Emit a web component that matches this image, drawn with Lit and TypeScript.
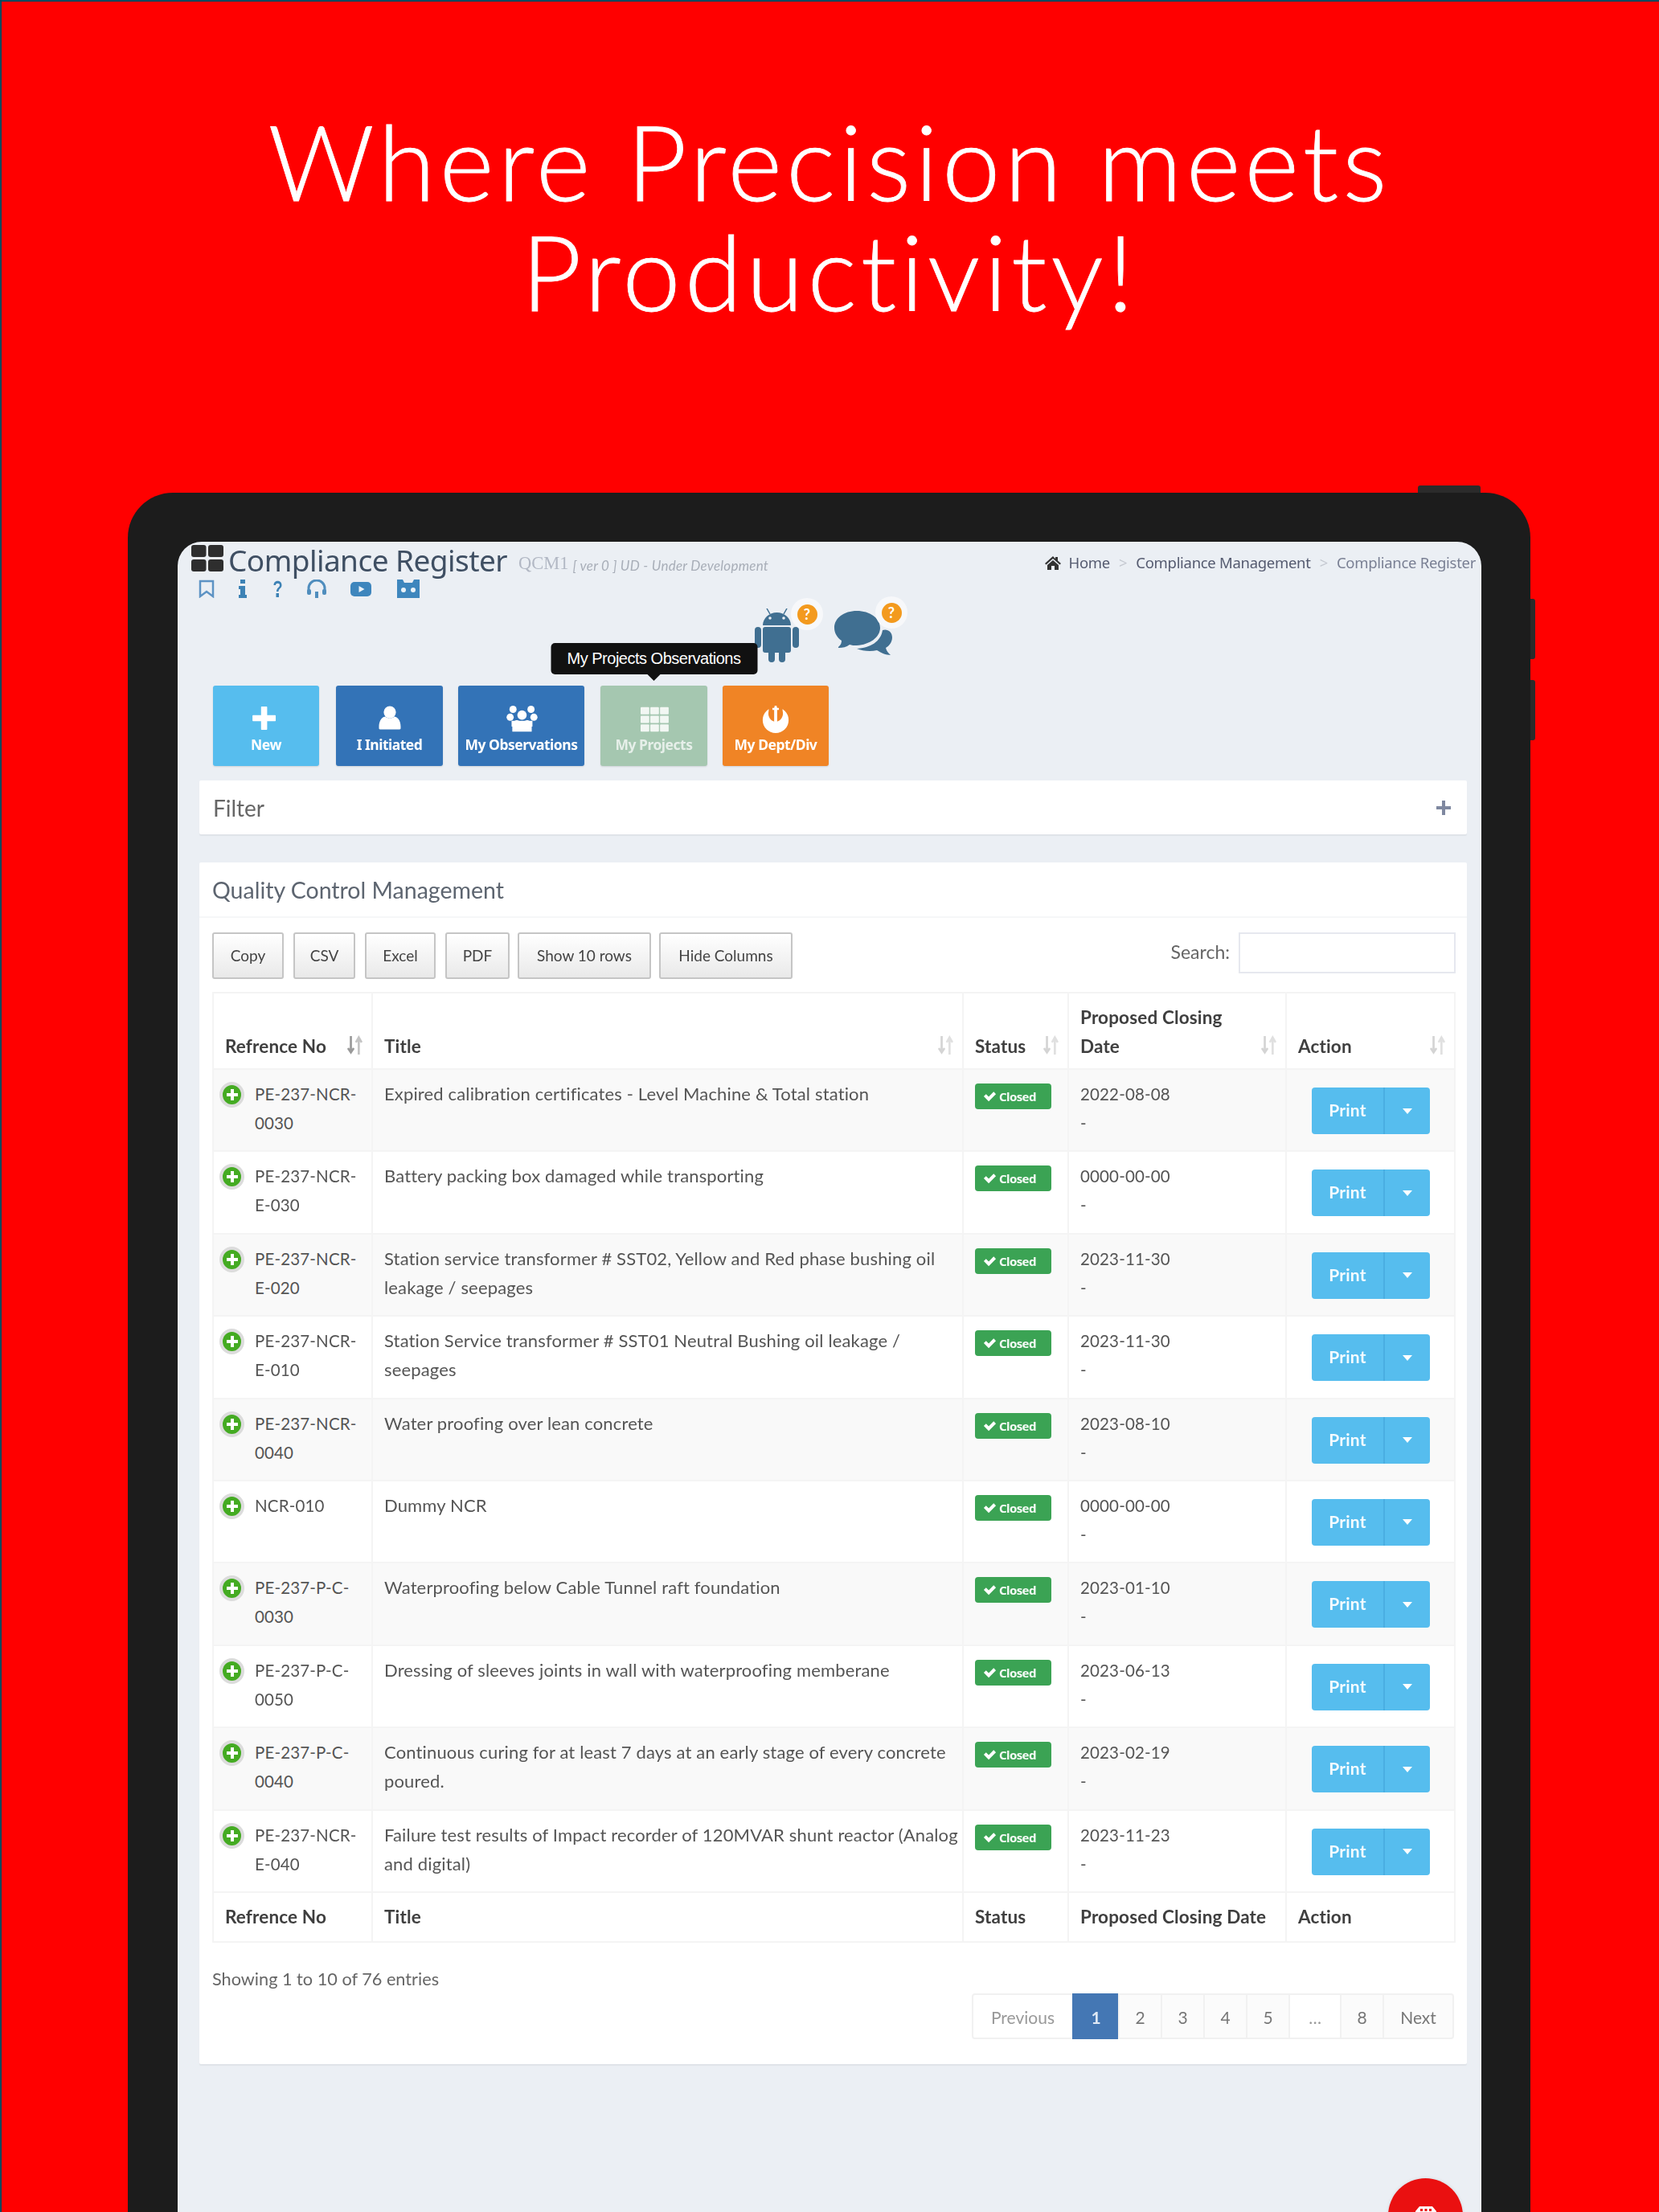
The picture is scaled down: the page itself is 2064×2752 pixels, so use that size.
import { LitElement, html, css, svg } from "lit";
import { customElement } from "lit/decorators.js";

const rows = [
  ["PE-237-NCR-0030", "Expired calibration certificates - Level Machine & Total station", "2022-08-08"],
  ["PE-237-NCR-E-030", "Battery packing box damaged while transporting", "0000-00-00"],
  ["PE-237-NCR-E-020", "Station service transformer # SST02, Yellow and Red phase bushing oil leakage / seepages", "2023-11-30"],
  ["PE-237-NCR-E-010", "Station Service transformer # SST01 Neutral Bushing oil leakage / seepages", "2023-11-30"],
  ["PE-237-NCR-0040", "Water proofing over lean concrete", "2023-08-10"],
  ["NCR-010", "Dummy NCR", "0000-00-00"],
  ["PE-237-P-C-0030", "Waterproofing below Cable Tunnel raft foundation", "2023-01-10"],
  ["PE-237-P-C-0050", "Dressing of sleeves joints in wall with waterproofing memberane", "2023-06-13"],
  ["PE-237-P-C-0040", "Continuous curing for at least 7 days at an early stage of every concrete poured.", "2023-02-19"],
  ["PE-237-NCR-E-040", "Failure test results of Impact recorder of 120MVAR shunt reactor (Analog and digital)", "2023-11-23"],
];

const sortIcon = (active = false) => html`<svg class="sort" viewBox="0 0 24 28" width="22" height="25">
  <path d="M7 1v20M3 18l4 6 4-6" fill="none" stroke=${active ? "#9a9a9a" : "#d4d4d4"} stroke-width="3"/>
  <path d="M18 27V6M14 10l4-7 4 7" fill="none" stroke=${active ? "#c4c4c4" : "#e0e0e0"} stroke-width="3"/>
</svg>`;

const tileIcons: Record<string, unknown> = {
  plus: svg`<path d="M14 0h8v14h14v8H22v14h-8V22H0v-8h14z" transform="translate(2 2) scale(.85)" fill="#fff" stroke="#fff" stroke-width="2" stroke-linejoin="round"/>`,
  user: svg`<circle cx="20" cy="9" r="8.5" fill="#fff"/><path d="M5 32c-1-12 5-17 9-17 2 3 10 3 12 0 4 0 10 5 9 17-1 1-2 1-3 1H8c-1 0-2 0-3-1z" fill="#fff"/>`,
  users: svg`<circle cx="8" cy="5" r="5" fill="#fff"/><circle cx="33" cy="5" r="5" fill="#fff"/><circle cx="4" cy="16" r="5" fill="#fff"/><circle cx="37" cy="16" r="5" fill="#fff"/><circle cx="20.5" cy="13" r="6.5" fill="#fff"/><path d="M6 21h29v8H6z" fill="#fff"/><path d="M7 36V27c0-5 4-7 7-7 3 2 10 2 13 0 3 0 7 2 7 7v9z" fill="#fff"/>`,
  grid: svg`${[0, 1, 2].map((r) => [0, 1, 2].map((c) => svg`<rect x=${1 + c * 13.5} y=${2 + r * 12} width="12" height="10" rx="1" fill="#fff" opacity=".85"/>`))}`,
  rebel: svg`<circle cx="20" cy="20" r="18" fill="#fff"/>
    <path d="M9 0H18V22C13 21 9 15 10 9 10.500 6 11 3 9 0z" fill="#f08425"/>
    <path d="M31 0H22V22C27 21 31 15 30 9 29.500 6 29 3 31 0z" fill="#f08425"/>
    <path d="M18.500 0h3v3h3v3h-3v17h-3V6h-3V3h3z" fill="#fff"/>`,
};

@customElement("app-root")
export class AppRoot extends LitElement {
  static styles = css`
    :host { display: block; width: 2064px; height: 2752px; overflow: hidden; }
    * { box-sizing: border-box; }
    .page { width: 2064px; height: 2752px; background: #ff0000; border-left: 2px solid #004a5e; border-top: 2px solid #004a5e; display: flex; flex-direction: column; overflow: hidden; font-family: "Lato", "Noto Sans", sans-serif; }
    h1 { margin: 0 0 0 -2px; padding-top: 130px; height: 611px; text-align: center; color: #fff; font: 300 130px/137px "Lato", "Liberation Sans", sans-serif; letter-spacing: 4.9px; -webkit-text-stroke: .8px #fff; flex: none; }
    .tablet { position: relative; flex: 1; margin-left: 157px; width: 1745px; background: #1c1c1c; border-radius: 56px 56px 0 0; padding: 61px 61px 0 62px; display: flex; min-height: 0; }
    .bump { position: absolute; top: -9px; left: 1605px; width: 78px; height: 9px; background: #2b2b2b; border-radius: 3px 3px 0 0; }
    .side { position: absolute; left: 1745px; width: 6px; background: #2b2b2b; border-radius: 0 3px 3px 0; }
    .side.a { top: 132px; height: 75px; }
    .side.b { top: 233px; height: 75px; }
    .screen { position: relative; flex: 1; background: #ebeff4; border-radius: 30px 30px 0 0; color: #555; filter: blur(.55px); }

    .top { display: flex; justify-content: space-between; height: 46px; padding: 4px 7px 0 17px; }
    .brand { display: flex; align-items: flex-start; }
    .logo { margin-right: 6px; }
    .brand h2 { margin: 0; font: 400 37px/38px "Noto Sans", sans-serif; color: #3f4f63; letter-spacing: -.55px; }
    .code { font: 400 22.5px/40px "Liberation Serif", serif; color: #b2b8c4; margin-left: 14px; padding-top: 3px; }
    .ver { font: italic 400 17px/40px "Lato", sans-serif; color: #a8aeb8; margin-left: 5px; padding-top: 6px; letter-spacing: .25px; }
    .crumbs { display: flex; align-items: center; height: 44px; gap: 11px; font: 400 18.5px/24px "Noto Sans", sans-serif; color: #555b70; letter-spacing: -.3px; }
    .crumbs .sep { color: #c4c8d0; }
    .crumbs .last { color: #7a8094; }
    .home { margin-right: -1px; }
    .links { display: flex; align-items: center; padding-left: 26px; height: 25px; }
    .links svg { display: block; }
    .links .l1 { margin-right: 30px; }
    .links .l2 { margin-right: 32px; }
    .links .l3 { margin-right: 30px; }
    .links .l4 { margin-right: 30px; }
    .links .l5 { margin-right: 32px; }

    .alerts { display: flex; margin: 12px 0 0 717px; height: 96px; align-items: flex-start; }
    .alert { position: relative; }
    .alert svg { display: block; }
    .droid { width: 57px; height: 67px; margin-right: 43px; }
    .chat { width: 72px; height: 57px; margin-top: 3px; }
    .dot { position: absolute; width: 40px; height: 40px; border-radius: 50%; background: #f7f8fa; display: flex; align-items: center; justify-content: center; }
    .dot span { width: 25px; height: 25px; border-radius: 50%; background: #f39a1e; color: #fff; font: 700 18px/25px "Lato", sans-serif; text-align: center; display: block; }
    .droid .dot { left: 46px; top: -13px; }
    .chat .dot { left: 51px; top: -18px; }

    .tiles { display: flex; margin-left: 44px; height: 100px; }
    .tile { position: relative; display: flex; flex-direction: column; align-items: center; border-radius: 3px; color: #fff; font: 700 17.5px/22px "Noto Sans", sans-serif; letter-spacing: -.5px; padding-top: 25px; box-shadow: 0 1px 2px rgba(0,0,0,.12); }
    .tile svg { display: block; height: 34px; margin-bottom: 3px; }
    .tile.new { width: 132px; background: #56bdee; margin-right: 21px; }
    .tile.init { width: 133px; background: #3373b7; margin-right: 19px; }
    .tile.obs { width: 157px; background: #3373b7; margin-right: 20px; }
    .tile.proj { width: 133px; background: #a5c7b0; margin-right: 19px; color: #e6efe9; }
    .tile.dept { width: 132px; background: #f08425; }
    .tip { position: absolute; bottom: calc(100% + 14px); left: 50%; transform: translateX(-50%); width: 257px; height: 39px; background: #111; border-radius: 5px; color: #fff; font: 400 20px/39px "Liberation Sans", sans-serif; text-align: center; white-space: nowrap; }
    .tip::after { content: ""; position: absolute; top: 100%; left: 50%; margin-left: -8px; border: 8px solid transparent; border-bottom: 0; border-top-color: #111; }

    .box { margin: 18px 18px 0 27px; background: #fff; border-radius: 2px; box-shadow: 0 2px 1px #dfe3e8; }
    .filter { display: flex; justify-content: space-between; align-items: center; height: 67px; padding: 0 17px; font: 400 28px/32px "Lato", sans-serif; color: #666; }
    .filter svg { display: block; margin-right: 3px; }
    .card { margin-top: 35px; height: 1495px; }
    .card-head { height: 69px; border-bottom: 2px solid #f6f7f8; padding: 17px 16px 0; font: 400 28.5px/34px "Lato", sans-serif; color: #5d6570; }
    .tools { display: flex; justify-content: space-between; padding: 18px 14px 0 16px; height: 92px; }
    .btns { display: flex; }
    .btn { height: 58px; border: 2px solid #c5c5c5; border-radius: 3px; background: linear-gradient(#fff, #e9e9e9); color: #444; font: 400 19px/54px "Lato", sans-serif; text-align: center; margin-right: 12px; }
    .btn.b1 { width: 89px; }
    .btn.b2 { width: 77px; }
    .btn.b3 { width: 88px; }
    .btn.b4 { width: 80px; margin-right: 10px; }
    .btn.b5 { width: 166px; margin-right: 10px; }
    .btn.b6 { width: 166px; margin-right: 0; }
    .search { display: flex; align-items: flex-start; font: 400 23px/48px "Lato", sans-serif; color: #666; }
    .search i { display: block; width: 270px; height: 51px; margin-left: 11px; background: #fff; border: 2px solid #e6e8ef; }

    table { margin-left: 16px; width: 1545px; table-layout: fixed; border-collapse: collapse; font: 400 22px/36px "Lato", sans-serif; letter-spacing: .15px; color: #555; }
    th, td { border: 2px solid #f4f4f4; text-align: left; vertical-align: top; }
    th { position: relative; font-size: 22.5px; font-weight: 700; color: #3f3f3f; padding: 12px 32px 9px 14px; vertical-align: bottom; }
    .sort { position: absolute; right: 10px; bottom: 16px; }
    td { height: 102.4px; padding: 12px 8px 0 14px; }
    td.title { padding-right: 0; }
    tbody tr:nth-child(odd) td { background: #f9f9f9; }
    td.ref { position: relative; padding-left: 51px; font-size: 20.5px; }
    td.date { font-size: 20.5px; }
    .expand { position: absolute; left: 7px; top: 15px; width: 31px; height: 32px; border-radius: 50%; background: #44ab22; border: 4px solid #dcdcdc; display: flex; align-items: center; justify-content: center; }
    .expand svg { display: block; }
    tfoot th { height: 62px; padding: 12px 8px 12px 14px; vertical-align: middle; }
    .badge { display: flex; align-items: center; gap: 3px; width: 95px; height: 32px; margin-top: 5px; padding-left: 10px; background: #3ba354; border-radius: 4px; color: #f4faf5; font: 700 15px/32px "Noto Sans", sans-serif; letter-spacing: -.6px; }
    .split { display: flex; width: 147px; height: 58px; margin: 10px 0 0 17px; border-radius: 4px; background: #56bdee; color: #f4fbff; font: 700 21px/56px "Lato", sans-serif; overflow: hidden; }
    .split b { width: 91px; font-weight: 700; text-align: center; border-right: 2px solid #4aaee2; }
    .split span { flex: 1; display: flex; align-items: center; justify-content: center; }

    .info { margin: 31px 0 0 16px; font: 400 21.7px/28px "Lato", sans-serif; color: #666; }
    .pager { display: flex; justify-content: flex-end; margin: 4px 16px 0 0; font: 400 21px/55px "Lato", sans-serif; color: #777; }
    .pager div { height: 57px; border: 2px solid #f1f1f1; margin-left: -2px; text-align: center; }
    .pager .p1 { width: 127px; color: #999; background: #fff; border-radius: 4px 0 0 4px; }
    .pager .on { width: 59px; background: #4477b4; border-color: #4477b4; color: #dfe9f5; font-weight: 700; }
    .pager .pn { width: 55px; background: #fbfbfb; }
    .pager .dots { width: 66px; background: #fff; color: #999; }
    .pager .nx { width: 89px; background: #fbfbfb; border-radius: 0 4px 4px 0; }
    .fab { position: absolute; left: 1506px; top: 2036px; width: 93px; height: 93px; border-radius: 50%; background: #ea1010; display: flex; justify-content: center; padding-top: 35px; box-shadow: 0 0 4px rgba(0,0,0,.1); }
    .fab svg { display: block; }
  `;

  tile(cls: string, icon: string, label: string, w: number, tip = false) {
    return html`<div class="tile ${cls}">
      ${tip ? html`<div class="tip">My Projects Observations</div>` : ""}
      <svg viewBox="0 0 40 38" width=${w} height="34">${tileIcons[icon]}</svg>${label}
    </div>`;
  }

  render() {
    return html`<div class="page">
      <h1>Where Precision meets<br />Productivity!</h1>
      <div class="tablet">
        <div class="bump"></div><div class="side a"></div><div class="side b"></div>
        <div class="screen">
          <div class="top">
            <div class="brand">
              <svg class="logo" viewBox="0 0 40 33" width="40" height="33"><rect width="18.5" height="15" rx="3" fill="#2e2e2e"/><rect x="21" width="19" height="15" rx="3" fill="#2e2e2e"/><rect y="18" width="18.5" height="15" rx="3" fill="#2e2e2e"/><rect x="21" y="18" width="19" height="15" rx="3" fill="#2e2e2e"/></svg>
              <h2>Compliance Register</h2>
              <span class="code">QCM1</span><span class="ver">[ ver 0 ] UD - Under Development</span>
            </div>
            <div class="crumbs">
              <svg class="home" viewBox="0 0 20 18" width="20" height="18"><path d="M10 1L0 10l1.5 1.5L10 4l8.500 7.500L20 10l-4-3.500V2h-3v2zM3 12v6h5v-5h4v5h5v-6l-7-6z" fill="#333"/></svg>
              <span>Home</span><span class="sep">&gt;</span><span>Compliance Management</span><span class="sep">&gt;</span><span class="last">Compliance Register</span>
            </div>
          </div>
          <div class="links">
            <svg class="l1" viewBox="0 0 20 23" width="20" height="23"><path d="M2 2h16v19l-8-6-8 6z" fill="none" stroke="#5d93c4" stroke-width="2.500"/></svg>
            <svg class="l2" viewBox="0 0 10 23" width="10" height="23"><path d="M2 0h6v5H2zM0 8h8v11h2v4H0v-4h2v-7H0z" fill="#3d82b5"/></svg>
            <svg class="l3" viewBox="0 0 13 23" width="13" height="23"><path d="M1.500 7c0-7 10-7 10 0 0 4-4 4-4 8H5c0-5 4-5 4-8 0-3-5-3-5 0zM4.500 17h3.500v5H4.500z" fill="#3d82b5"/></svg>
            <svg class="l4" viewBox="0 0 24 23" width="24" height="23"><path d="M2 15V11a10 10 0 0 1 20 0v4" fill="none" stroke="#4f8dbd" stroke-width="3"/><rect x="0" y="12" width="5" height="7" rx="2" fill="#4f8dbd"/><rect x="19" y="12" width="5" height="7" rx="2" fill="#4f8dbd"/><rect x="10" y="15" width="4" height="8" fill="#4f8dbd"/></svg>
            <svg class="l5" viewBox="0 0 26 20" width="26" height="20"><rect width="26" height="18" y="1" rx="5" fill="#3e86bd"/><path d="M10.500 6l7 4-7 4z" fill="#eaf2f8"/></svg>
            <svg viewBox="0 0 28 23" width="28" height="23"><path d="M0 0h7l2 4h10l2-4h7v23H0z" fill="#3e86bd"/><circle cx="8" cy="13" r="3" fill="#eaf2f8"/><circle cx="20" cy="13" r="3" fill="#eaf2f8"/></svg>
          </div>
          <div class="alerts">
            <div class="alert droid">
              <svg viewBox="0 0 57 67" width="57" height="67" fill="#406f91">
                <path d="M16 0l4 7M41 0l-4 7" stroke="#406f91" stroke-width="1.500"/>
                <path d="M11 21a17.500 16 0 0 1 35 0z"/><rect x="11" y="23" width="35" height="32" rx="3"/>
                <rect x="1" y="23" width="8" height="26" rx="4"/><rect x="48" y="23" width="8" height="26" rx="4"/>
                <rect x="18" y="50" width="8" height="17" rx="4"/><rect x="31" y="50" width="8" height="17" rx="4"/>
                <circle cx="20" cy="12" r="1.800" fill="#ebeff4"/><circle cx="37" cy="12" r="1.800" fill="#ebeff4"/>
              </svg>
              <div class="dot"><span>?</span></div>
            </div>
            <div class="alert chat">
              <svg viewBox="0 0 72 57" width="72" height="57" fill="#406f91">
                <path d="M28 0C44 0 57 9 57 21S44 42 28 43C24 43 22 43 19 42 15 45 10 46 6 46 4 46 5 45 6 44 8 42 9 40 9 37 3 33 0 27 0 21 0 9 12 0 28 0z"/>
                <path d="M60 24C66 22 72 26 72 33 72 39 68 44 64 46 65 50 67 52 70 55 64 55 58 52 53 49 45 51 35 50 28 47 45 46 58 38 60 24z"/>
              </svg>
              <div class="dot"><span>?</span></div>
            </div>
          </div>
          <div class="tiles">
            ${this.tile("new", "plus", "New", 38)}
            ${this.tile("init", "user", "I Initiated", 40)}
            ${this.tile("obs", "users", "My Observations", 40)}
            ${this.tile("proj", "grid", "My Projects", 40, true)}
            ${this.tile("dept", "rebel", "My Dept/Div", 40)}
          </div>
          <div class="box filter"><span>Filter</span>
            <svg viewBox="0 0 18 18" width="18" height="18"><path d="M7 0h4v7h7v4h-7v7H7v-7H0V7h7z" fill="#7f88a0"/></svg>
          </div>
          <div class="box card">
            <div class="card-head">Quality Control Management</div>
            <div class="tools">
              <div class="btns">
                <div class="btn b1">Copy</div><div class="btn b2">CSV</div><div class="btn b3">Excel</div><div class="btn b4">PDF</div><div class="btn b5">Show 10 rows</div><div class="btn b6">Hide Columns</div>
              </div>
              <div class="search">Search:<i></i></div>
            </div>
            <table>
              <colgroup><col style="width:198px" /><col style="width:735px" /><col style="width:131px" /><col style="width:271px" /><col style="width:210px" /></colgroup>
              <thead><tr>
                <th>Refrence No${sortIcon(true)}</th><th>Title${sortIcon()}</th><th>Status${sortIcon()}</th><th>Proposed Closing Date${sortIcon()}</th><th>Action${sortIcon()}</th>
              </tr></thead>
              <tbody>
                ${rows.map((r) => html`<tr>
                  <td class="ref"><span class="expand"><svg viewBox="0 0 14 14" width="14" height="14"><path d="M5 0h4v5h5v4H9v5H5V9H0V5h5z" fill="#fff"/></svg></span>${r[0]}</td>
                  <td class="title">${r[1]}</td>
                  <td><div class="badge"><svg viewBox="0 0 18 14" width="17" height="14"><path d="M1 7l3-3 3.500 3.500L14 1l3 3-9.500 9.500z" fill="#fff"/></svg>Closed</div></td>
                  <td class="date">${r[2]}<br />-</td>
                  <td><div class="split"><b>Print</b><span><svg viewBox="0 0 12 7" width="12" height="7"><path d="M0 0h12L6 7z" fill="#fff"/></svg></span></div></td>
                </tr>`)}
              </tbody>
              <tfoot><tr><th>Refrence No</th><th>Title</th><th>Status</th><th>Proposed Closing Date</th><th>Action</th></tr></tfoot>
            </table>
            <div class="info">Showing 1 to 10 of 76 entries</div>
            <div class="pager">
              <div class="p1">Previous</div><div class="on">1</div><div class="pn">2</div><div class="pn">3</div><div class="pn">4</div><div class="pn">5</div><div class="dots">…</div><div class="pn">8</div><div class="nx">Next</div>
            </div>
          </div>
          <div class="fab"><svg viewBox="0 0 26 20" width="26" height="20"><path d="M5 0h16l5 6v14H0V6z" fill="#fff"/><path d="M6 3h3v3H6zM11.500 3h3v3h-3zM17 3h3v3h-3z" fill="#ea1010"/></svg></div>
        </div>
      </div>
    </div>`;
  }
}
